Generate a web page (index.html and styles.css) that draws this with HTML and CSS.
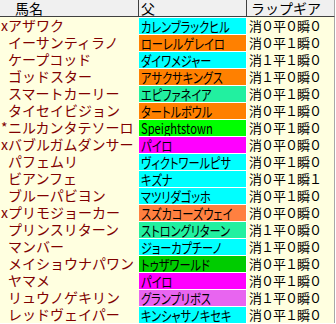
FILE: index.html
```html
<!DOCTYPE html>
<html lang="ja">
<head>
<meta charset="utf-8">
<link rel="stylesheet" href="styles.css">
</head>
<body>
<div class="sheet">
  <div class="h h1">馬名</div><div class="h h2">父</div><div class="h h3">ラップギア</div>

  <div class="n"><span class="mk">x</span>アザワク</div><div class="f"><span class="fc cyan"><span class="ft">カレンブラックヒル</span></span></div><div class="g">消０平０瞬０</div>
  <div class="n"><span class="mk"></span>イーサンティラノ</div><div class="f"><span class="fc orange"><span class="ft">ローレルゲレイロ</span></span></div><div class="g">消０平１瞬０</div>
  <div class="n"><span class="mk"></span>ケープコッド</div><div class="f"><span class="fc cyan"><span class="ft">ダイワメジャー</span></span></div><div class="g">消１平１瞬０</div>
  <div class="n"><span class="mk"></span>ゴッドスター</div><div class="f"><span class="fc orange"><span class="ft">アサクサキングス</span></span></div><div class="g">消１平０瞬０</div>
  <div class="n"><span class="mk"></span>スマートカーリー</div><div class="f"><span class="fc teal"><span class="ft">エピファネイア</span></span></div><div class="g">消０平１瞬０</div>
  <div class="n"><span class="mk"></span>タイセイビジョン</div><div class="f"><span class="fc orange"><span class="ft">タートルボウル</span></span></div><div class="g">消０平１瞬０</div>
  <div class="n"><span class="mk">*</span>ニルカンタテソーロ</div><div class="f"><span class="fc green"><span class="ft">Speightstown</span></span></div><div class="g">消０平１瞬０</div>
  <div class="n"><span class="mk">x</span>バブルガムダンサー</div><div class="f"><span class="fc magenta"><span class="ft">パイロ</span></span></div><div class="g">消０平０瞬０</div>
  <div class="n"><span class="mk"></span>パフェムリ</div><div class="f"><span class="fc cyan"><span class="ft">ヴィクトワールピサ</span></span></div><div class="g">消０平１瞬０</div>
  <div class="n"><span class="mk"></span>ビアンフェ</div><div class="f"><span class="fc cyan"><span class="ft">キズナ</span></span></div><div class="g">消０平１瞬１</div>
  <div class="n"><span class="mk"></span>ブルーパビヨン</div><div class="f"><span class="fc cyan"><span class="ft">マツリダゴッホ</span></span></div><div class="g">消０平１瞬０</div>
  <div class="n"><span class="mk">x</span>プリモジョーカー</div><div class="f"><span class="fc coral"><span class="ft">スズカコーズウェイ</span></span></div><div class="g">消０平０瞬０</div>
  <div class="n"><span class="mk"></span>プリンスリターン</div><div class="f"><span class="fc teal"><span class="ft">ストロングリターン</span></span></div><div class="g">消１平０瞬０</div>
  <div class="n"><span class="mk"></span>マンバー</div><div class="f"><span class="fc cyan"><span class="ft">ジョーカプチーノ</span></span></div><div class="g">消１平０瞬０</div>
  <div class="n"><span class="mk"></span>メイショウナパワン</div><div class="f"><span class="fc dgreen"><span class="ft">トゥザワールド</span></span></div><div class="g">消０平１瞬０</div>
  <div class="n"><span class="mk"></span>ヤマメ</div><div class="f"><span class="fc magenta"><span class="ft">パイロ</span></span></div><div class="g">消０平１瞬０</div>
  <div class="n"><span class="mk"></span>リュウノゲキリン</div><div class="f"><span class="fc violet"><span class="ft">グランプリボス</span></span></div><div class="g">消１平０瞬０</div>
  <div class="n"><span class="mk"></span>レッドヴェイパー</div><div class="f"><span class="fc cyan"><span class="ft">キンシャサノキセキ</span></span></div><div class="g">消０平１瞬０</div>
</div>
</body>
</html>
```

FILE: styles.css
```css
html, body {
  margin: 0;
  padding: 0;
  background: #ffffff;
}

.sheet {
  display: grid;
  grid-template-columns: 139px 108px 88px;
  grid-auto-rows: 17px;
  font-family: "Noto Sans CJK JP", sans-serif;
  font-size: 14px;
  width: 335px;
}

.h {
  box-sizing: border-box;
  height: 17px;
  background: #f0f0f0;
  border-bottom: 1px solid #404040;
  color: #000;
  line-height: 16px;
  white-space: nowrap;
}

.h1 {
  border-right: 1px solid #404040;
  padding-left: 15px;
}

.h2 {
  border-right: 1px solid #404040;
  padding-left: 2px;
}

.h3 {
  padding-left: 4px;
  border-right: 1px solid #a8a8a8;
}

.n {
  display: flex;
  align-items: center;
  background: #ffffe0;
  color: #800000;
  padding-left: 1px;
  white-space: nowrap;
  line-height: 17px;
}

.mk {
  display: inline-block;
  width: 7px;
  text-align: left;
}

.f {
  box-sizing: border-box;
  background: #ffffff;
  padding: 1px 1px 0 0;
}

.fc {
  display: block;
  height: 16px;
  line-height: 16px;
  padding-left: 2px;
  white-space: nowrap;
  overflow: hidden;
  color: #000;
}

.ft {
  display: inline-block;
  font-feature-settings: "palt";
  transform: scaleX(0.8);
  transform-origin: left center;
}

.cyan { background: #00ffff; }
.orange { background: #ff8000; }
.teal { background: #22f0a0; }
.green { background: #00ff00; }
.magenta { background: #ff00ff; }
.coral { background: #ff8040; }
.dgreen { background: #00cc00; }
.violet { background: #e865f0; }

.g {
  box-sizing: border-box;
  background: #ffffe0;
  color: #000;
  font-size: 13px;
  letter-spacing: -1px;
  padding-left: 2px;
  line-height: 17px;
  white-space: nowrap;
  border-right: 1px solid #a8a8a8;
}
```
